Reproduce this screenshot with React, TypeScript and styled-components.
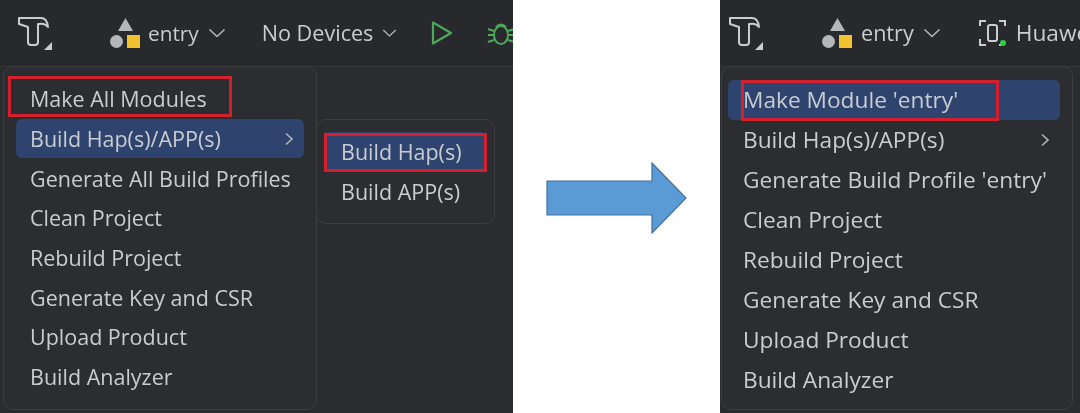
import React from 'react';
import styled, { createGlobalStyle } from 'styled-components';

const GlobalStyle = createGlobalStyle`
    html, body {
        margin: 0;
        padding: 0;
        background: #fff;
    }
    body {
        font-family: "Open Sans", "Noto Sans", sans-serif;
    }
`;

const Page = styled.div`
    display: grid;
    grid-template-columns: 513px 207px 360px;
    width: 1080px;
    height: 413px;
    overflow: hidden;
`;

const Panel = styled.section`
    display: flex;
    flex-direction: column;
    background: #2a2c2f;
    overflow: hidden;
    filter: blur(0.45px);
`;

const Toolbar = styled.div<{ $inset: number }>`
    display: flex;
    align-items: center;
    flex: none;
    height: 66px;
    padding-left: ${p => p.$inset}px;
    background: #27292c;
    border-bottom: 1px solid #35373a;
    white-space: nowrap;
`;

const ToolLabel = styled.span<{ $size: number; $gap: number }>`
    color: #c9ccd1;
    font-size: ${p => p.$size}px;
    line-height: 30px;
    margin-left: ${p => p.$gap}px;
`;

const ToolIcon = styled.svg<{ $gap: number }>`
    flex: none;
    margin-left: ${p => p.$gap}px;
`;

const Body = styled.div<{ $inset: number }>`
    display: flex;
    align-items: flex-start;
    margin-top: -1px;
    padding-left: ${p => p.$inset}px;
`;

const Menu = styled.div<{ $width: number; $padTop: number; $padLeft: number }>`
    box-sizing: border-box;
    width: ${p => p.$width}px;
    height: 344px;
    padding: ${p => p.$padTop}px 12px 0 ${p => p.$padLeft}px;
    background: #2b2d30;
    border: 1px solid #3c3e42;
    border-radius: 10px;
`;

const SubMenu = styled.div`
    box-sizing: border-box;
    width: 179px;
    height: 105px;
    margin-top: 53px;
    margin-left: -1px;
    padding: 12px 7px 0;
    background: #2b2d30;
    border: 1px solid #3c3e42;
    border-radius: 10px;
`;

const Row = styled.div<{ $active?: boolean; $pad: number; $size: number; $height: number }>`
    position: relative;
    display: flex;
    align-items: center;
    justify-content: space-between;
    box-sizing: border-box;
    height: ${p => p.$height}px;
    padding: 0 10px 0 ${p => p.$pad}px;
    color: #c9ccd1;
    font-size: ${p => p.$size}px;
    white-space: nowrap;
    border-radius: 6px;
    background: ${p => (p.$active ? '#2e436e' : 'transparent')};
`;

const RedMark = styled.span<{ $left: number; $top: number; $width: number; $height: number }>`
    position: absolute;
    left: ${p => p.$left}px;
    top: ${p => p.$top}px;
    width: ${p => p.$width}px;
    height: ${p => p.$height}px;
    box-sizing: border-box;
    border: 3px solid #d3202c;
`;

const Gutter = styled.div`
    display: flex;
    align-items: center;
    justify-content: center;
    background: #fff;
    padding-bottom: 17px;
`;

const Hammer = () => (
    <ToolIcon $gap={0} width="36" height="36" viewBox="0 0 36 36" fill="none" stroke="#c9ccd1" strokeWidth="2">
        <path d="M2 3 H24 Q30 3 31 12 Q28 8 22 9 H21 V27 Q21 30 18 30 H14 Q11 30 11 27 V12 L2 9 Z" strokeLinejoin="round" />
        <path d="M27 35 L35 27 V35 Z" fill="#c9ccd1" stroke="none" />
    </ToolIcon>
);

const Modules = ({ gap }: { gap: number }) => (
    <ToolIcon $gap={gap} width="30" height="30" viewBox="0 0 30 30">
        <path d="M15.5 0 L23 13 H8 Z" fill="#b4b6b9" />
        <circle cx="6.5" cy="23.5" r="6.5" fill="#b4b6b9" />
        <rect x="17" y="17" width="13" height="13" fill="#f2c230" />
    </ToolIcon>
);

const Chevron = ({ gap, size = 18 }: { gap: number; size?: number }) => (
    <ToolIcon $gap={gap} width={size} height="10" viewBox="0 0 18 10" fill="none" stroke="#b4b7bc" strokeWidth="1.6">
        <path d="M1.5 1.5 L9 8.5 L16.5 1.5" />
    </ToolIcon>
);

const Play = () => (
    <ToolIcon $gap={33} width="24" height="26" viewBox="0 0 24 26" fill="none" stroke="#4fa85a" strokeWidth="2.2">
        <path d="M3 2.5 L21 13 L3 23.5 Z" strokeLinejoin="round" />
    </ToolIcon>
);

const Bug = () => (
    <ToolIcon $gap={33} width="28" height="26" viewBox="0 0 28 26" fill="none" stroke="#4fa85a" strokeWidth="2">
        <ellipse cx="14" cy="15" rx="7" ry="9" />
        <path d="M9 7 Q14 2 19 7 M1 9 L7 11 M1 15 H7 M1 22 L7 20 M21 11 L27 9 M21 15 H27 M21 20 L27 22" />
    </ToolIcon>
);

const Device = () => (
    <ToolIcon $gap={38} width="28" height="28" viewBox="0 0 28 28" fill="none" stroke="#c9ccd1" strokeWidth="2">
        <path d="M1 7 V2 H7 M20 2 H26 V7 M1 20 V26 H7 M20 26 H22" />
        <rect x="9" y="6" width="9" height="16" rx="2" />
        <circle cx="24" cy="24" r="3" fill="#2fd13f" stroke="none" />
    </ToolIcon>
);

const Caret = styled.svg`
    flex: none;
`;

const RowCaret = () => (
    <Caret width="10" height="14" viewBox="0 0 10 14" fill="none" stroke="#b4b7bc" strokeWidth="1.6">
        <path d="M2 1.5 L8 7 L2 12.5" />
    </Caret>
);

const Arrow = () => (
    <svg width="142" height="72" viewBox="0 0 142 72">
        <path d="M1 19 H106 V1 L140 36 L106 71 V53 H1 Z" fill="#5b9bd5" stroke="#41719c" strokeWidth="1.2" />
    </svg>
);

const tail = ['Clean Project', 'Rebuild Project', 'Generate Key and CSR', 'Upload Product', 'Build Analyzer'];

export default function App() {
    const left = { $pad: 14, $size: 21.5, $height: 39.7 };
    const right = { $pad: 15, $size: 22.7, $height: 39.9 };
    return (
        <>
            <GlobalStyle />
            <Page>
                <Panel>
                    <Toolbar $inset={17}>
                        <Hammer />
                        <Modules gap={57} />
                        <ToolLabel $size={20.8} $gap={8}>entry</ToolLabel>
                        <Chevron gap={9} />
                        <ToolLabel $size={21.6} $gap={36}>No Devices</ToolLabel>
                        <Chevron gap={9} size={15} />
                        <Play />
                        <Bug />
                    </Toolbar>
                    <Body $inset={3}>
                        <Menu $width={314} $padTop={12} $padLeft={12}>
                            <Row {...left}>
                                Make All Modules
                                <RedMark $left={-8} $top={-3} $width={224} $height={41} />
                            </Row>
                            <Row {...left} $active>
                                Build Hap(s)/APP(s)
                                <RowCaret />
                            </Row>
                            <Row {...left}>Generate All Build Profiles</Row>
                            {tail.map(t => (
                                <Row {...left} key={t}>{t}</Row>
                            ))}
                        </Menu>
                        <SubMenu>
                            <Row {...left} $pad={17} $active>
                                Build Hap(s)
                                <RedMark $left={0} $top={1} $width={163} $height={39} />
                            </Row>
                            <Row {...left} $pad={17}>Build APP(s)</Row>
                        </SubMenu>
                    </Body>
                </Panel>
                <Gutter>
                    <Arrow />
                </Gutter>
                <Panel>
                    <Toolbar $inset={8}>
                        <Hammer />
                        <Modules gap={58} />
                        <ToolLabel $size={21.6} $gap={9}>entry</ToolLabel>
                        <Chevron gap={9} />
                        <Device />
                        <ToolLabel $size={22.7} $gap={9}>Huawe</ToolLabel>
                    </Toolbar>
                    <Body $inset={1}>
                        <Menu $width={352} $padTop={13} $padLeft={6}>
                            <Row {...right} $active>
                                Make Module 'entry'
                                <RedMark $left={13} $top={0} $width={258} $height={41} />
                            </Row>
                            <Row {...right}>
                                Build Hap(s)/APP(s)
                                <RowCaret />
                            </Row>
                            <Row {...right}>Generate Build Profile 'entry'</Row>
                            {tail.map(t => (
                                <Row {...right} key={t}>{t}</Row>
                            ))}
                        </Menu>
                    </Body>
                </Panel>
            </Page>
        </>
    );
}
